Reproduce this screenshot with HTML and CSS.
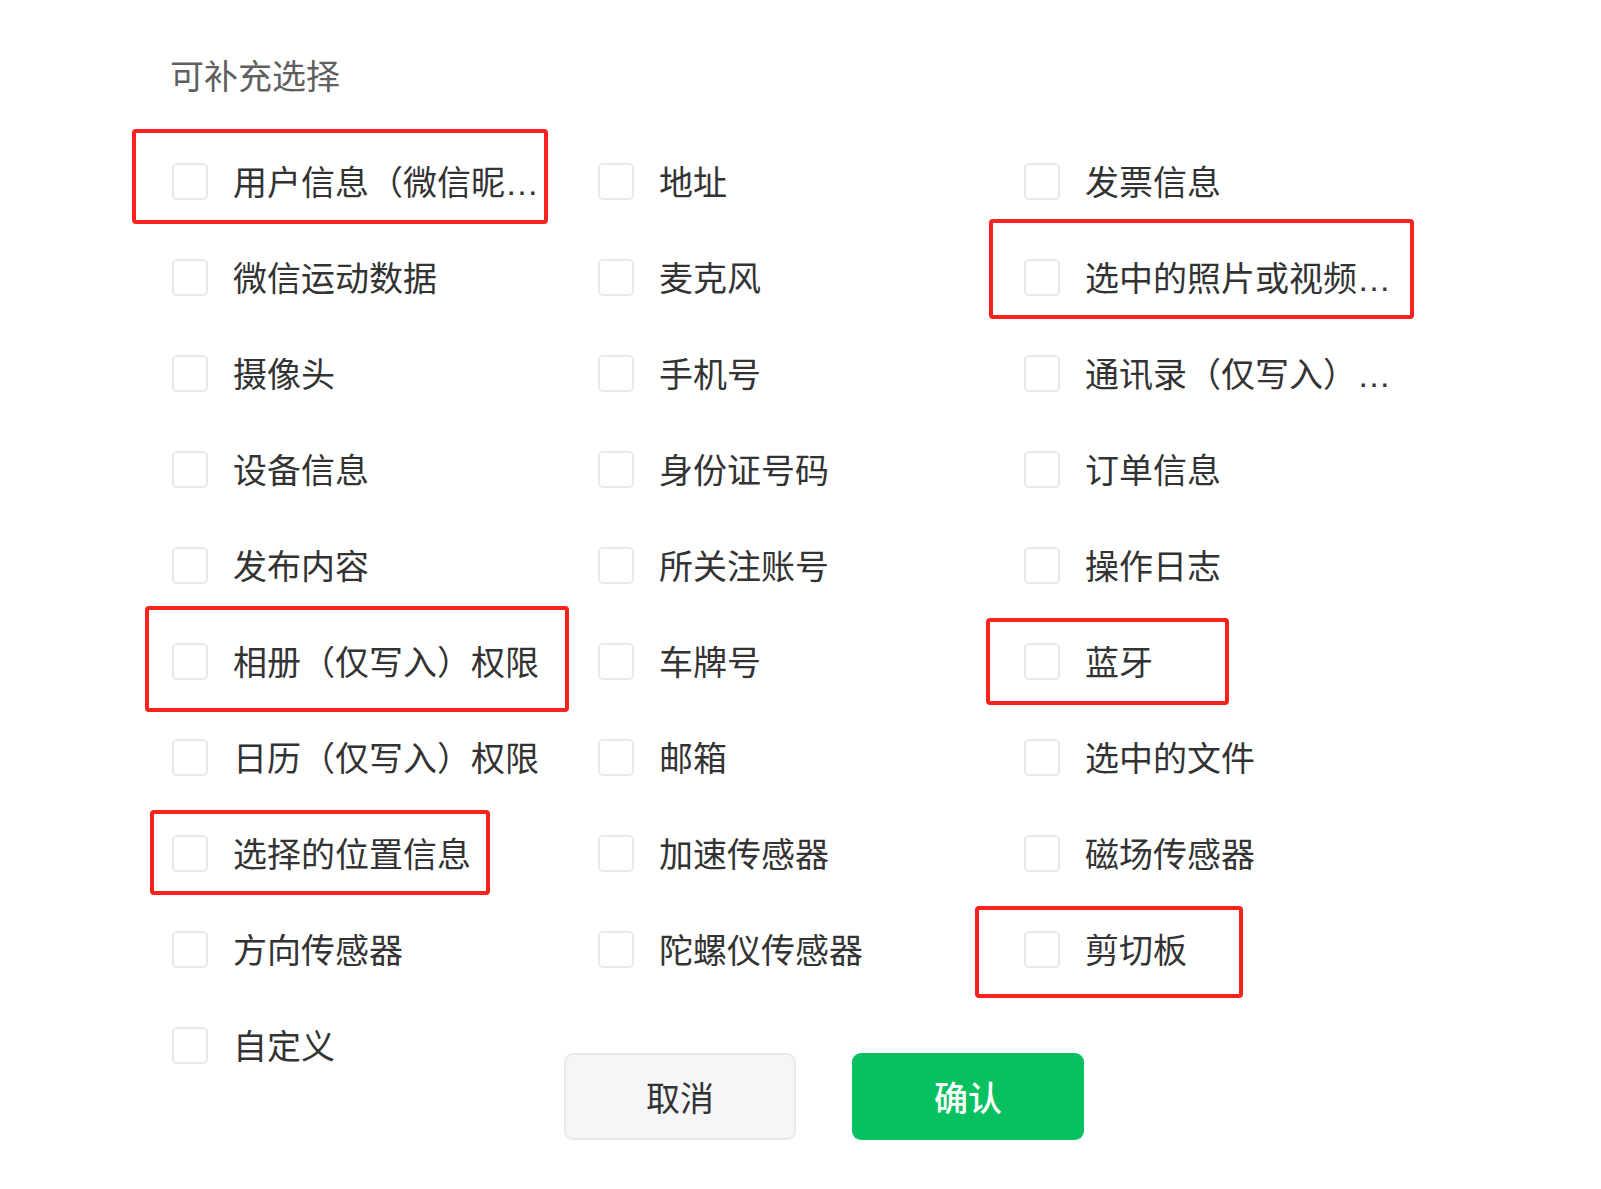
FILE: index.html
```html
<!DOCTYPE html>
<html lang="zh-CN">
<head>
<meta charset="utf-8">
<title>可补充选择</title>
<link rel="stylesheet" href="styles.css">
</head>
<body>
<div class="page">
  <div class="title">可补充选择</div>
  <div class="grid">
    <label class="item"><span class="box"></span><span class="text">用户信息（微信昵称、头像）</span><span class="mark mark-1"></span></label>
    <label class="item"><span class="box"></span><span class="text">地址</span></label>
    <label class="item"><span class="box"></span><span class="text">发票信息</span></label>

    <label class="item"><span class="box"></span><span class="text">微信运动数据</span></label>
    <label class="item"><span class="box"></span><span class="text">麦克风</span></label>
    <label class="item"><span class="box"></span><span class="text">选中的照片或视频信息</span><span class="mark mark-2"></span></label>

    <label class="item"><span class="box"></span><span class="text">摄像头</span></label>
    <label class="item"><span class="box"></span><span class="text">手机号</span></label>
    <label class="item"><span class="box"></span><span class="text">通讯录（仅写入）权限</span></label>

    <label class="item"><span class="box"></span><span class="text">设备信息</span></label>
    <label class="item"><span class="box"></span><span class="text">身份证号码</span></label>
    <label class="item"><span class="box"></span><span class="text">订单信息</span></label>

    <label class="item"><span class="box"></span><span class="text">发布内容</span></label>
    <label class="item"><span class="box"></span><span class="text">所关注账号</span></label>
    <label class="item"><span class="box"></span><span class="text">操作日志</span></label>

    <label class="item"><span class="box"></span><span class="text">相册（仅写入）权限</span><span class="mark mark-3"></span></label>
    <label class="item"><span class="box"></span><span class="text">车牌号</span></label>
    <label class="item"><span class="box"></span><span class="text">蓝牙</span><span class="mark mark-5"></span></label>

    <label class="item"><span class="box"></span><span class="text">日历（仅写入）权限</span></label>
    <label class="item"><span class="box"></span><span class="text">邮箱</span></label>
    <label class="item"><span class="box"></span><span class="text">选中的文件</span></label>

    <label class="item"><span class="box"></span><span class="text">选择的位置信息</span><span class="mark mark-4"></span></label>
    <label class="item"><span class="box"></span><span class="text">加速传感器</span></label>
    <label class="item"><span class="box"></span><span class="text">磁场传感器</span></label>

    <label class="item"><span class="box"></span><span class="text">方向传感器</span></label>
    <label class="item"><span class="box"></span><span class="text">陀螺仪传感器</span></label>
    <label class="item"><span class="box"></span><span class="text">剪切板</span><span class="mark mark-6"></span></label>

    <label class="item"><span class="box"></span><span class="text">自定义</span></label>
  </div>
  <div class="footer">
    <button class="btn btn-cancel">取消</button>
    <button class="btn btn-ok">确认</button>
  </div>
</div>
</body>
</html>
```

FILE: styles.css
```css
* {
  box-sizing: border-box;
}

html, body {
  margin: 0;
  padding: 0;
  background: #ffffff;
}

body {
  font-family: "Liberation Sans", "Noto Sans CJK SC", sans-serif;
  color: #333333;
}

.page {
  padding: 53px 0 0 172px;
}

.title {
  font-size: 34px;
  line-height: 48px;
  color: #5f5f5f;
  margin-left: -2px;
}

.grid {
  margin-top: 32px;
  display: grid;
  grid-template-columns: repeat(3, 426px);
  grid-auto-rows: 96px;
}

.item {
  position: relative;
  display: flex;
  align-items: center;
  gap: 25px;
}

.box {
  flex: none;
  width: 36px;
  height: 37px;
  border: 2px solid #e9e9e9;
  border-radius: 5px;
  background: #ffffff;
}

.text {
  font-size: 34px;
  line-height: 44px;
  padding-top: 4px;
  color: #333333;
  max-width: 306px;
  white-space: nowrap;
  overflow: hidden;
  text-overflow: ellipsis;
}

.mark {
  position: absolute;
  border: 4px solid #f7231c;
  border-radius: 4px;
  pointer-events: none;
}

.mark-1 { left: -40px; top: -4px; width: 416px; height: 95px; }
.mark-2 { left: -35px; top: -10px; width: 425px; height: 100px; }
.mark-3 { left: -27px; top: -7px; width: 424px; height: 106px; }
.mark-4 { left: -22px; top: 5px; width: 340px; height: 85px; }
.mark-5 { left: -38px; top: 5px; width: 243px; height: 87px; }
.mark-6 { left: -49px; top: 5px; width: 268px; height: 92px; }

.footer {
  display: flex;
  gap: 56px;
  margin-top: -40px;
  padding-left: 392px;
}

.btn {
  width: 232px;
  height: 87px;
  border-radius: 9px;
  font-family: "Liberation Sans", "Noto Sans CJK SC", sans-serif;
  font-size: 34px;
  padding: 0;
  cursor: pointer;
}

.btn-cancel {
  background: #f5f6f8;
  border: 2px solid #e8e8ea;
  color: #333333;
}

.btn-ok {
  background: #07c160;
  border: none;
  color: #ffffff;
  font-weight: 500;
}
```
